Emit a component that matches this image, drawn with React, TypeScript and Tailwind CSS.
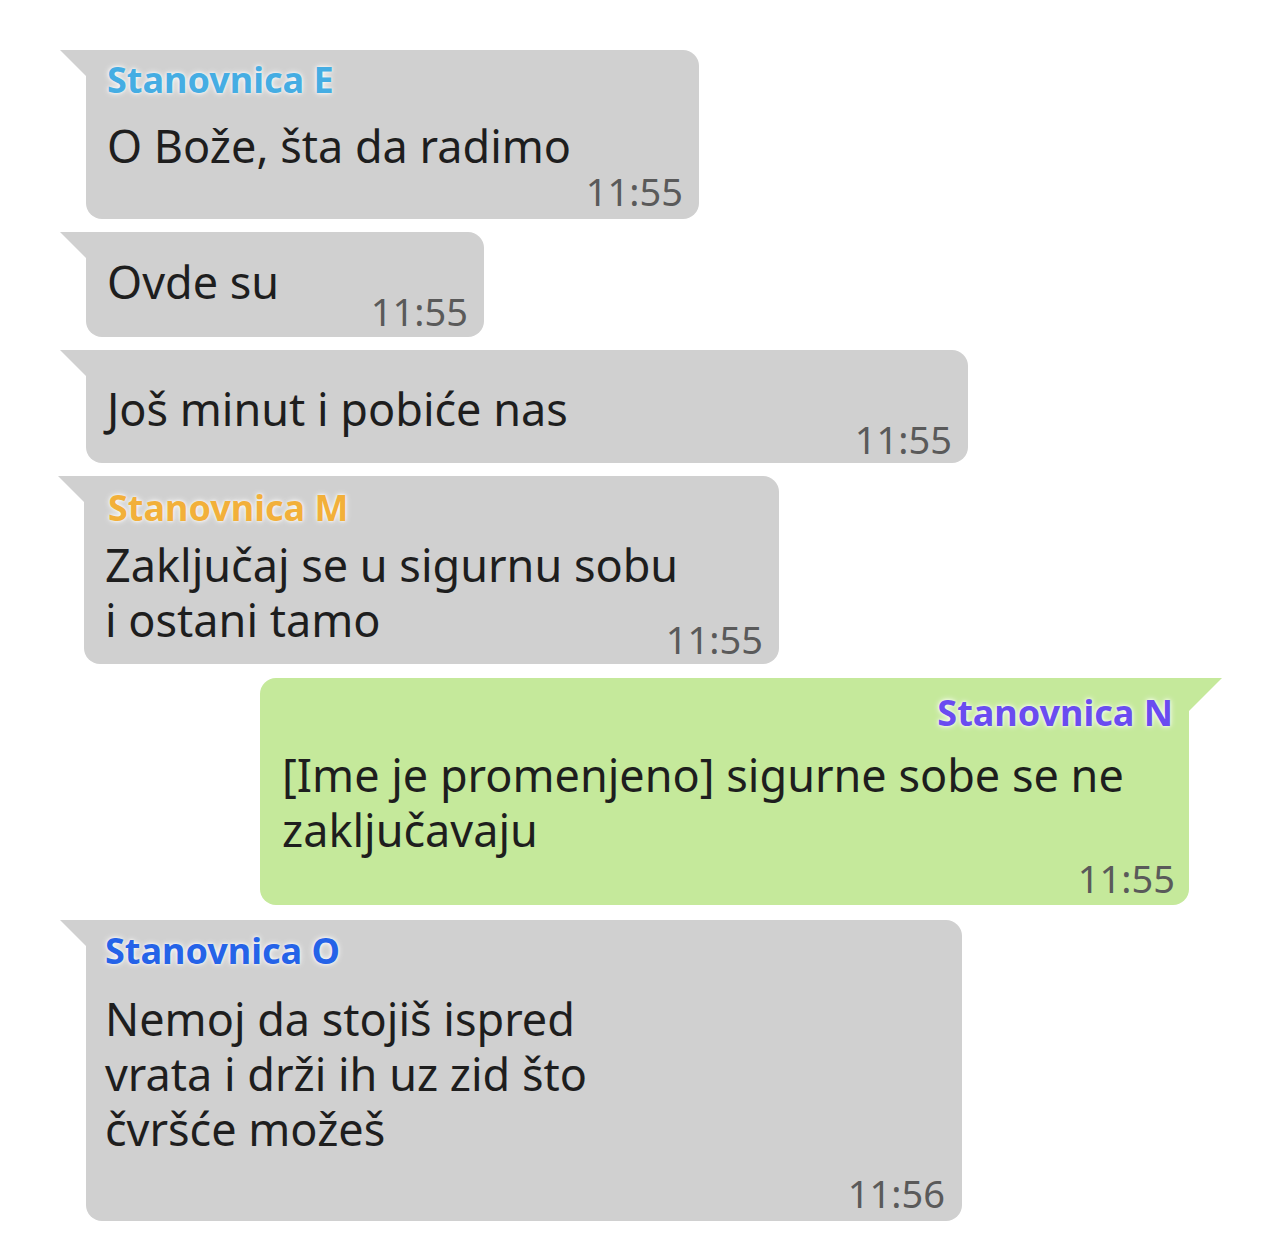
import React from "react";

type B = {
  left: string;
  width: string;
  mt: string;
  name?: string;
  nameColor?: string;
  nameCls?: string;
  lines: string[];
  linesCls: string;
  time: string;
  timeCls: string;
  pad: string;
};

const bubbles: B[] = [
  {
    left: "ml-[86px]",
    width: "w-[613px]",
    mt: "mt-[50px]",
    name: "Stanovnica E",
    nameColor: "text-[#45ade3]",
    nameCls: "pt-[10px]",
    lines: ["O Bože, šta da radimo"],
    linesCls: "mt-[18px]",
    time: "11:55",
    timeCls: "mt-0",
    pad: "pb-[10px]",
  },
  {
    left: "ml-[86px]",
    width: "w-[398px]",
    mt: "mt-[13px]",
    lines: ["Ovde su"],
    linesCls: "pt-[22px]",
    time: "11:55",
    timeCls: "-mt-[16px]",
    pad: "pb-[8px]",
  },
  {
    left: "ml-[86px]",
    width: "w-[882px]",
    mt: "mt-[13px]",
    lines: ["Još minut i pobiće nas"],
    linesCls: "pt-[31px]",
    time: "11:55",
    timeCls: "-mt-[15px]",
    pad: "pb-[6px]",
  },
  {
    left: "ml-[84px]",
    width: "w-[695px]",
    mt: "mt-[13px]",
    name: "Stanovnica M",
    nameColor: "text-[#f2b03a]",
    nameCls: "pt-[12px] pl-[3px]",
    lines: ["Zaključaj se u sigurnu sobu", "i ostani tamo"],
    linesCls: "mt-[9px]",
    time: "11:55",
    timeCls: "-mt-[26px]",
    pad: "pb-[7px]",
  },
];

function Tail({ side }: { side: "left" | "right" }) {
  if (side === "left") {
    return (
      <svg
        className="absolute -left-[26px] top-0"
        width="27"
        height="27"
        viewBox="0 0 27 27"
      >
        <polygon points="0,0 27,0 27,27" fill="#d0d0d0" />
      </svg>
    );
  }
  return (
    <svg
      className="absolute -right-[33px] top-0"
      width="34"
      height="34"
      viewBox="0 0 34 34"
    >
      <polygon points="0,0 34,0 0,34" fill="#c5e99b" />
    </svg>
  );
}

const font = { fontFamily: '"Noto Sans", "Open Sans", sans-serif' };
const glow = "[text-shadow:0_0_6px_rgba(255,255,255,0.95),0_0_3px_rgba(255,255,255,0.9)]";

function LeftBubble({ b }: { b: B }) {
  return (
    <div
      className={`relative ${b.left} ${b.width} ${b.mt} ${b.pad} bg-[#d0d0d0] rounded-tr-[16px] rounded-b-[16px] pl-[21px] pr-[16px]`}
    >
      <Tail side="left" />
      {b.name && (
        <div
          className={`${b.nameCls} ${b.nameColor} ${glow} text-[36px] leading-[40px] font-bold`}
        >
          {b.name}
        </div>
      )}
      <div className={`${b.linesCls} text-[45px] leading-[55px] text-[#1e1e1e]`}>
        {b.lines.map((l) => (
          <div key={l}>{l}</div>
        ))}
      </div>
      <div
        className={`${b.timeCls} text-right text-[38px] leading-[36px] text-[#5a5a5a]`}
      >
        {b.time}
      </div>
    </div>
  );
}

export default function App() {
  return (
    <div className="w-[1280px] h-[1260px] bg-white overflow-hidden flex flex-col" style={font}>
      {bubbles.map((b, i) => (
        <LeftBubble key={i} b={b} />
      ))}
      <div className="relative ml-[260px] w-[929px] mt-[14px] bg-[#c5e99b] rounded-tl-[16px] rounded-b-[16px] pl-[22px] pr-[14px] pb-[9px]">
        <Tail side="right" />
        <div
          className={`pt-[15px] text-right text-[36px] leading-[40px] font-bold text-[#6a4cf0] pr-[2px] ${glow}`}
        >
          Stanovnica N
        </div>
        <div className="mt-[14px] text-[45px] leading-[55px] text-[#1e1e1e]">
          <div>[Ime je promenjeno] sigurne sobe se ne</div>
          <div>zaključavaju</div>
        </div>
        <div className="mt-[3px] text-right text-[38px] leading-[36px] text-[#5a5a5a]">
          11:55
        </div>
      </div>
      <div className="relative ml-[86px] w-[876px] mt-[15px] bg-[#d0d0d0] rounded-tr-[16px] rounded-b-[16px] pl-[19px] pr-[17px] pb-[10px]">
        <Tail side="left" />
        <div
          className={`pt-[11px] text-[36px] leading-[40px] font-bold text-[#2563e8] ${glow}`}
        >
          Stanovnica O
        </div>
        <div className="mt-[20px] text-[45px] leading-[55px] text-[#1e1e1e]">
          <div>Nemoj da stojiš ispred</div>
          <div>vrata i drži ih uz zid što</div>
          <div>čvršće možeš</div>
        </div>
        <div className="mt-[19px] text-right text-[38px] leading-[36px] text-[#5a5a5a]">
          11:56
        </div>
      </div>
    </div>
  );
}
